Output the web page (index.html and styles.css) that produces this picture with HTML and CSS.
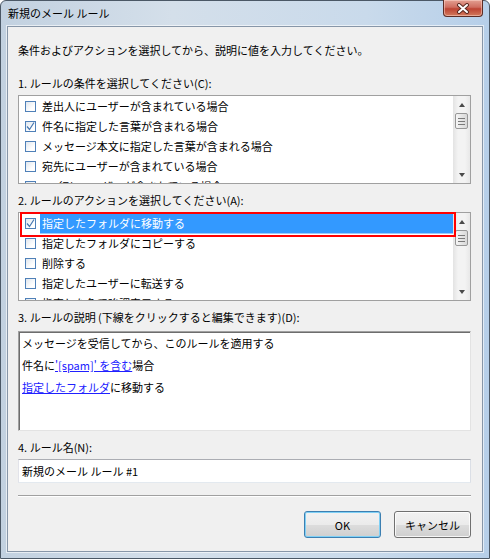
FILE: index.html
```html
<!DOCTYPE html>
<html lang="ja">
<head>
  <meta charset="UTF-8">
  <title>新規のメール ルール</title>
  <link rel="stylesheet" href="styles.css">
</head>
<body>
  <div class="window">
    <div class="titlebar">
      <span class="title">新規のメール ルール</span>
      <div class="close">
        <svg width="14" height="11" viewBox="0 0 14 11">
          <path d="M3 2 L11 9 M11 2 L3 9" stroke="#5a2a22" stroke-width="4" stroke-linecap="round"/>
          <path d="M3 2 L11 9 M11 2 L3 9" stroke="#fff" stroke-width="2" stroke-linecap="round"/>
        </svg>
      </div>
    </div>

    <div class="client">
      <p class="intro">条件およびアクションを選択してから、説明に値を入力してください。</p>

      <div class="label">1. ルールの条件を選択してください(C):</div>
      <div class="listbox">
        <ul class="items">
          <li><span class="check"></span><span class="text">差出人にユーザーが含まれている場合</span></li>
          <li><span class="check checked"><svg width="9" height="9" viewBox="0 0 9 9"><path d="M1 4.5 L3.5 7.5 L8 0.5" fill="none" stroke="#4677b0" stroke-width="1.2"/></svg></span><span class="text">件名に指定した言葉が含まれる場合</span></li>
          <li><span class="check"></span><span class="text">メッセージ本文に指定した言葉が含まれる場合</span></li>
          <li><span class="check"></span><span class="text">宛先にユーザーが含まれている場合</span></li>
          <li><span class="check"></span><span class="text">CC 行にユーザーが含まれている場合</span></li>
        </ul>
        <div class="scrollbar">
          <div class="arrow"><span class="tri up"></span></div>
          <div class="thumb"><span></span><span></span><span></span></div>
          <div class="track"></div>
          <div class="arrow"><span class="tri down"></span></div>
        </div>
      </div>

      <div class="label">2. ルールのアクションを選択してください(A):</div>
      <div class="listbox actions">
        <ul class="items">
          <li class="selected"><span class="check checked"><svg width="9" height="9" viewBox="0 0 9 9"><path d="M1 4.5 L3.5 7.5 L8 0.5" fill="none" stroke="#4677b0" stroke-width="1.2"/></svg></span><span class="text">指定したフォルダに移動する</span></li>
          <li><span class="check"></span><span class="text">指定したフォルダにコピーする</span></li>
          <li><span class="check"></span><span class="text">削除する</span></li>
          <li><span class="check"></span><span class="text">指定したユーザーに転送する</span></li>
          <li><span class="check"></span><span class="text">指定した色で強調表示する</span></li>
        </ul>
        <div class="scrollbar">
          <div class="arrow"><span class="tri up"></span></div>
          <div class="thumb"><span></span><span></span><span></span></div>
          <div class="track"></div>
          <div class="arrow"><span class="tri down"></span></div>
        </div>
        <div class="marker"></div>
      </div>

      <div class="label">3. ルールの説明 (下線をクリックすると編集できます)(D):</div>
      <div class="description">
        <div>メッセージを受信してから、このルールを適用する</div>
        <div>件名に<a href="#">'[spam]' を含む</a>場合</div>
        <div><a href="#">指定したフォルダ</a>に移動する</div>
      </div>

      <div class="label">4. ルール名(N):</div>
      <input type="text" class="name-input" value="新規のメール ルール #1">

      <div class="separator"></div>

      <div class="buttons">
        <button class="default">OK</button>
        <button>キャンセル</button>
      </div>
    </div>
  </div>
</body>
</html>
```

FILE: styles.css
```css
body {
  margin: 0;
  font-family: "Noto Sans CJK JP", "Noto Sans", sans-serif;
  font-size: 11px;
  color: #000;
  background: #fff;
}

.window {
  width: 490px;
  height: 559px;
  box-sizing: border-box;
  border: 1px solid #4b5866;
  border-radius: 6px 6px 0 0;
  background: linear-gradient(to right, #c2d1e0 0%, #d4dfea 35%, #c9daeb 75%, #b6cfe9 100%);
  padding: 0 6px 6px;
  display: flex;
  flex-direction: column;
}

.titlebar {
  height: 25px;
  display: flex;
  justify-content: space-between;
  align-items: flex-start;
}

.title {
  padding: 5px 0 0 1px;
  line-height: 14px;
}

.close {
  width: 40px;
  height: 17px;
  box-sizing: border-box;
  margin-top: -1px;
  border: 1px solid #5c2c25;
  border-top: none;
  border-radius: 0 0 4px 4px;
  background: linear-gradient(#e3a092, #cf6e60 45%, #bd4433 55%, #d27a5c);
  box-shadow: inset 0 0 0 1px rgba(255, 220, 210, 0.5);
  display: flex;
  align-items: center;
  justify-content: center;
}

.client {
  flex: 1;
  background: #f0f0f0;
  border: 1px solid #8796a8;
  box-shadow: 0 0 0 1px rgba(255, 255, 255, 0.6);
  padding: 0 11px 0 10px;
  display: flex;
  flex-direction: column;
}

.intro {
  margin: 15px 0 0;
  line-height: 16px;
}

.label {
  margin-top: 8px;
  line-height: 16px;
}

.intro + .label {
  margin-top: 17px;
}

/* list boxes */
.listbox {
  position: relative;
  margin-top: 4px;
  height: 89px;
  box-sizing: border-box;
  border: 1px solid #a0a0a0;
  background: #fff;
  display: flex;
}

.items {
  flex: 1;
  margin: 0;
  padding: 0;
  list-style: none;
  overflow: hidden;
}

.items li {
  height: 20px;
  display: flex;
  align-items: center;
  padding-left: 6px;
  white-space: nowrap;
}

.check {
  width: 11px;
  height: 11px;
  box-sizing: border-box;
  border: 1px solid #4f80b8;
  background: linear-gradient(135deg, #dfe6ee, #fff 70%);
  margin-right: 4px;
  display: flex;
  align-items: center;
  justify-content: center;
  flex: none;
}

.items .text {
  flex: 1;
  padding: 0 2px;
  line-height: 20px;
}

.items li.selected .text {
  background: #3399ff;
  color: #fff;
  border-bottom: 1px solid #9ccbfa;
  line-height: 20px;
  height: 21px;
  box-sizing: border-box;
}

.marker {
  position: absolute;
  left: 1px;
  top: -1px;
  width: 436px;
  height: 25px;
  box-sizing: border-box;
  border: 2px solid #ff0000;
}

.scrollbar {
  width: 17px;
  display: flex;
  flex-direction: column;
  background: linear-gradient(to right, #e3e3e3, #f3f3f3 30%, #f3f3f3 70%, #e8e8e8);
}

.arrow {
  height: 17px;
  display: flex;
  align-items: center;
  justify-content: center;
}

.tri {
  width: 0;
  height: 0;
  border-left: 3.5px solid transparent;
  border-right: 3.5px solid transparent;
}

.tri.up {
  border-bottom: 4px solid #4a4a4a;
}

.tri.down {
  border-top: 4px solid #4a4a4a;
}

.thumb {
  height: 16px;
  margin: 0 2px;
  box-sizing: border-box;
  border: 1px solid #979797;
  border-radius: 2px;
  background: linear-gradient(to right, #f6f6f6, #e6e6e6 50%, #d9d9d9);
  display: flex;
  flex-direction: column;
  align-items: center;
  justify-content: center;
  gap: 2px;
}

.thumb span {
  width: 7px;
  height: 1px;
  background: #7a7a7a;
}

.track {
  flex: 1;
}

/* description */
.description {
  margin-top: 6px;
  height: 100px;
  box-sizing: border-box;
  border: 1px solid;
  border-color: #a0a0a0 #e3e3e3 #e3e3e3 #a0a0a0;
  box-shadow: inset 1px 1px 0 #6d6d6d;
  background: #fff;
  padding: 0 3px;
  line-height: 22px;
}

.description a {
  color: #2020ff;
  text-decoration: underline;
}

.name-input {
  margin-top: 4px;
  height: 24px;
  box-sizing: border-box;
  border: 1px solid;
  border-color: #abadb3 #dbdfe6 #e3e9ef #e2e3ea;
  background: #fff;
  padding: 0 3px;
  font: inherit;
  color: #000;
  outline: none;
}

.separator {
  margin-top: 12px;
  height: 1px;
  background: #a0a0a0;
  border-bottom: 1px solid #fff;
}

.buttons {
  margin-top: 14px;
  display: flex;
  justify-content: flex-end;
  gap: 13px;
}

.buttons button {
  width: 77px;
  height: 27px;
  border: 1px solid #707070;
  border-radius: 3px;
  background: linear-gradient(#f2f2f2, #ebebeb 50%, #dddddd 51%, #cfcfcf);
  box-shadow: inset 0 0 0 1px rgba(255, 255, 255, 0.8);
  font: inherit;
  color: #000;
  padding: 0;
}

.buttons button.default {
  border-color: #3c7fb1;
  box-shadow: inset 0 0 0 1px #7fd0f5;
}
```
